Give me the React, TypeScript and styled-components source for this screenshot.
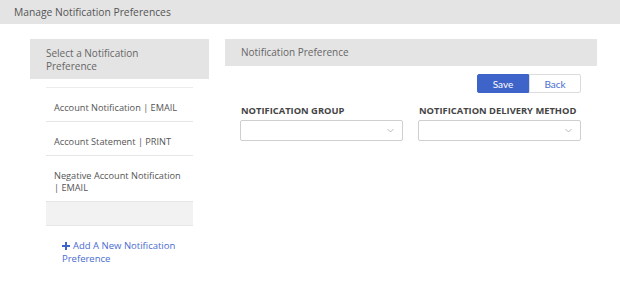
import React from "react";
import styled, { createGlobalStyle } from "styled-components";

const Global = createGlobalStyle`
  html, body { margin: 0; padding: 0; background: #fff; }
  body { font-family: "Open Sans", "Liberation Sans", sans-serif; color: #555; }
  * { box-sizing: border-box; }
`;

const Page = styled.div`
  width: 620px;
  height: 290px;
  background: #fff;
`;

const TopBar = styled.div`
  height: 24px;
  background: #e4e4e4;
  display: flex;
  align-items: center;
  padding-left: 14px;
  font-size: 10.3px;
  color: #555;
`;

const Main = styled.div`
  display: flex;
  gap: 16px;
  padding: 15px 23px 0 30px;
`;

const LeftCol = styled.div`
  width: 179px;
  display: flex;
  flex-direction: column;
`;

const PanelHeader = styled.div<{ $h: number }>`
  height: ${(p) => p.$h}px;
  background: #e4e4e4;
  padding: 0 24px 0 16px;
  font-size: 10px;
  line-height: 12.5px;
  color: #666;
  display: flex;
  align-items: ${(p) => (p.$h > 30 ? "flex-start" : "center")};
  padding-top: ${(p) => (p.$h > 30 ? 8 : 0)}px;
`;

const List = styled.ul`
  list-style: none;
  margin: 8px 16px 0 16px;
  padding: 0;
  border-top: 1px solid #ececec;
`;

const Item = styled.li<{ $empty?: boolean }>`
  border-bottom: 1px solid #e6e6e6;
  padding: ${(p) => (p.$empty ? "0" : "14px 8px 7px 8px")};
  height: ${(p) => (p.$empty ? "24px" : "auto")};
  background: ${(p) => (p.$empty ? "#f2f2f2" : "#fff")};
  font-size: 9.2px;
  line-height: 12px;
  color: #555;
`;

const AddLink = styled.a`
  display: block;
  margin: 13px 16px 0 32px;
  font-size: 9.5px;
  line-height: 13px;
  color: #4a6cd0;
  text-decoration: none;
`;

const Plus = styled.svg`
  width: 8px;
  height: 8px;
  margin-right: 3px;
  vertical-align: -0.5px;
`;

const RightCol = styled.div`
  width: 372px;
  display: flex;
  flex-direction: column;
`;

const ButtonRow = styled.div`
  display: flex;
  justify-content: flex-end;
  padding-right: 16px;
  margin-top: 8px;
`;

const Btn = styled.button<{ $primary?: boolean }>`
  width: 52px;
  height: 19px;
  font-family: "Lato", "Open Sans", sans-serif;
  font-size: 10px;
  border: 1px solid ${(p) => (p.$primary ? "#3f64c9" : "#dcdcdc")};
  background: ${(p) => (p.$primary ? "#3f64c9" : "#fff")};
  color: ${(p) => (p.$primary ? "#fff" : "#4a6cd0")};
  border-radius: ${(p) => (p.$primary ? "2px 0 0 2px" : "0 2px 2px 0")};
  padding: 0;
  cursor: pointer;
`;

const FormRow = styled.div`
  display: grid;
  grid-template-columns: 163px 163px;
  gap: 15px;
  padding-left: 15px;
  margin-top: 12px;
`;

const Field = styled.div`
  display: flex;
  flex-direction: column;
`;

const Label = styled.label`
  font-family: "Open Sans", sans-serif;
  font-weight: 700;
  font-size: 9.35px;
  line-height: 12px;
  color: #444;
  padding-left: 1px;
  margin-bottom: 3px;
  white-space: nowrap;
`;

const Select = styled.div`
  height: 21px;
  border: 1px solid #cfcfcf;
  border-radius: 2px;
  display: flex;
  align-items: center;
  justify-content: flex-end;
  padding-right: 8px;
`;

const Chevron = () => (
  <svg width="7" height="5" viewBox="0 0 7 5">
    <path d="M0.5 1 L3.5 4 L6.5 1" fill="none" stroke="#aaa" strokeWidth="0.8" />
  </svg>
);

export default function App() {
  return (
    <Page>
      <Global />
      <TopBar>Manage Notification Preferences</TopBar>
      <Main>
        <LeftCol>
          <PanelHeader $h={40}>Select a Notification Preference</PanelHeader>
          <List>
            <Item>Account Notification | EMAIL</Item>
            <Item>Account Statement | PRINT</Item>
            <Item>Negative Account Notification | EMAIL</Item>
            <Item $empty />
          </List>
          <AddLink href="#">
            <Plus viewBox="0 0 8 8">
              <path d="M3 0h2v3h3v2H5v3H3V5H0V3h3z" fill="#3f64c9" />
            </Plus>
            Add A New Notification Preference
          </AddLink>
        </LeftCol>
        <RightCol>
          <PanelHeader $h={27}>Notification Preference</PanelHeader>
          <ButtonRow>
            <Btn $primary>Save</Btn>
            <Btn>Back</Btn>
          </ButtonRow>
          <FormRow>
            <Field>
              <Label>NOTIFICATION GROUP</Label>
              <Select>
                <Chevron />
              </Select>
            </Field>
            <Field>
              <Label>NOTIFICATION DELIVERY METHOD</Label>
              <Select>
                <Chevron />
              </Select>
            </Field>
          </FormRow>
        </RightCol>
      </Main>
    </Page>
  );
}
